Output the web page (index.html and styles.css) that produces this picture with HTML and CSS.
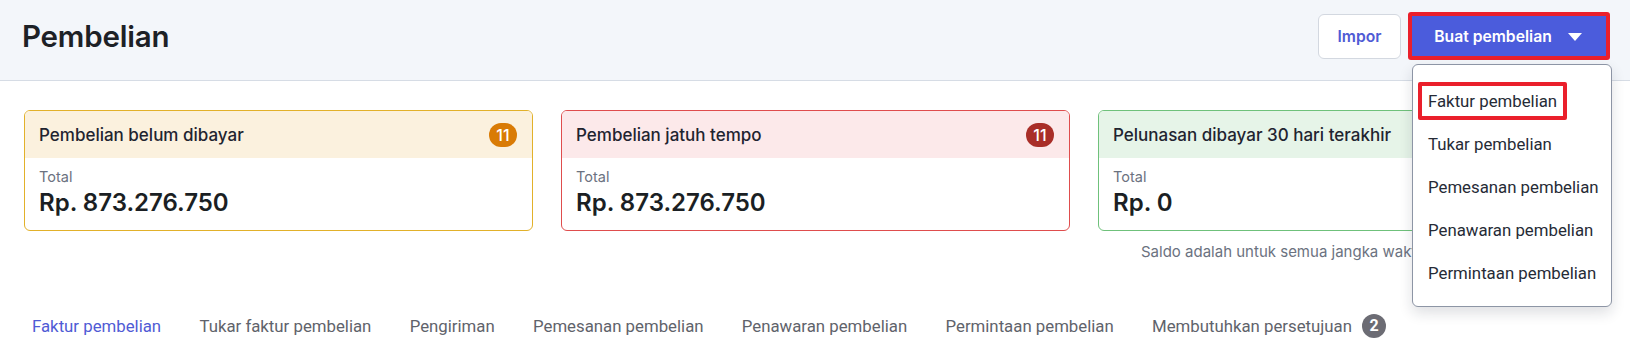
FILE: index.html
```html
<!DOCTYPE html>
<html lang="id">
<head>
<meta charset="utf-8">
<title>Pembelian</title>
<link rel="stylesheet" href="styles.css">
</head>
<body>
<header class="topbar">
  <h1 class="title">Pembelian</h1>
  <div class="actions">
    <button class="btn btn-outline">Impor</button>
    <div class="split">
      <button class="btn btn-primary">Buat pembelian <svg class="caret" width="14" height="8" viewBox="0 0 14 8"><path d="M0 0 L14 0 L7 8 Z" fill="#fff"/></svg></button>
      <ul class="menu">
        <li class="menu-item"><span class="mark">Faktur pembelian</span></li>
        <li class="menu-item">Tukar pembelian</li>
        <li class="menu-item">Pemesanan pembelian</li>
        <li class="menu-item">Penawaran pembelian</li>
        <li class="menu-item">Permintaan pembelian</li>
      </ul>
    </div>
  </div>
</header>
<main class="content">
  <section class="cards">
    <div class="card card-yellow">
      <div class="card-head"><span>Pembelian belum dibayar</span><span class="badge badge-orange">11</span></div>
      <div class="card-body"><div class="label">Total</div><div class="amount">Rp. 873.276.750</div></div>
    </div>
    <div class="card card-red">
      <div class="card-head"><span>Pembelian jatuh tempo</span><span class="badge badge-red">11</span></div>
      <div class="card-body"><div class="label">Total</div><div class="amount">Rp. 873.276.750</div></div>
    </div>
    <div class="card card-green">
      <div class="card-head"><span>Pelunasan dibayar 30 hari terakhir</span></div>
      <div class="card-body"><div class="label">Total</div><div class="amount">Rp. 0</div></div>
    </div>
    <p class="note">Saldo adalah untuk semua jangka waktu</p>
  </section>
  <nav class="tabs">
    <a class="tab active">Faktur pembelian</a>
    <a class="tab">Tukar faktur pembelian</a>
    <a class="tab">Pengiriman</a>
    <a class="tab">Pemesanan pembelian</a>
    <a class="tab">Penawaran pembelian</a>
    <a class="tab">Permintaan pembelian</a>
    <a class="tab">Membutuhkan persetujuan <span class="count">2</span></a>
  </nav>
</main>
</body>
</html>
```
FILE: styles.css
```css
* { box-sizing: border-box; }
body {
  margin: 0;
  background: #ffffff;
  font-family: Inter, "Liberation Sans", sans-serif;
  color: #1f2329;
}
.topbar {
  height: 81px;
  background: #f3f6fa;
  border-bottom: 1px solid #d6dce5;
  display: flex;
  align-items: center;
  justify-content: space-between;
  padding: 0 20px 8px 22px;
}
.title {
  margin: 0;
  font-size: 29.5px;
  font-weight: 600;
  color: #1d2126;
  letter-spacing: -0.2px;
}
.actions {
  display: flex;
  align-items: center;
  gap: 7px;
}
.btn {
  font-family: Inter, "Liberation Sans", sans-serif;
  font-size: 15.7px;
  font-weight: 600;
  cursor: pointer;
}
.btn-outline {
  width: 83px;
  height: 45px;
  background: #ffffff;
  border: 1px solid #d3d8e0;
  border-radius: 6px;
  color: #4f5bd5;
}
.split { position: relative; }
.btn-primary {
  width: 202px;
  height: 48px;
  background: #4b5cdc;
  border: 4px solid #ea1f2b;
  border-radius: 3px;
  color: #ffffff;
  display: flex;
  align-items: center;
  justify-content: center;
  gap: 16px;
  padding: 0 2px 0 0;
}
.caret { display: block; margin-top: 1px; }
.menu {
  position: absolute;
  top: 52px;
  right: -2px;
  width: 200px;
  margin: 0;
  padding: 14px 0 12px;
  list-style: none;
  background: #ffffff;
  border: 1px solid #8d95a5;
  border-radius: 6px;
  box-shadow: 0 6px 14px rgba(20, 30, 50, 0.14);
  z-index: 5;
}
.menu-item {
  height: 43px;
  display: flex;
  align-items: center;
  padding-left: 15px;
  font-family: Roboto, "Liberation Sans", sans-serif;
  font-size: 16.8px;
  color: #262b36;
}
.mark {
  display: inline-block;
  line-height: 30px;
  border: 4px solid #ea1f2b;
  padding: 0 6px;
  margin-left: -10px;
  border-radius: 2px;
}
.content {
  padding: 29px 23px 0 24px;
}
.cards {
  display: grid;
  grid-template-columns: repeat(3, 1fr);
  column-gap: 28px;
  row-gap: 0;
}
.card {
  border: 1px solid;
  border-radius: 6px;
  overflow: hidden;
}
.card-head {
  height: 47px;
  display: flex;
  align-items: center;
  justify-content: space-between;
  padding: 0 15px 0 14px;
  font-size: 17px;
  font-weight: 500;
  color: #1f2430;
}
.card-body {
  padding: 10px 14px 13px;
}
.label {
  font-size: 14.5px;
  line-height: 18px;
  color: #6b7280;
}
.amount {
  margin-top: 2px;
  font-size: 24px;
  line-height: 29px;
  font-weight: 600;
  color: #1b1f24;
}
.card-yellow { border-color: #e2b12a; }
.card-yellow .card-head { background: #fbf1de; }
.card-red { border-color: #df4d4d; }
.card-red .card-head { background: #fce9ea; }
.card-green { border-color: #6fc17b; }
.card-green .card-head { background: #e6f4e8; }
.badge {
  min-width: 28px;
  height: 24px;
  border-radius: 12px;
  display: inline-flex;
  align-items: center;
  justify-content: center;
  color: #ffffff;
  font-size: 16px;
  font-weight: 500;
}
.badge-orange { background: #d97b05; }
.badge-red { background: #a92e28; }
.note {
  grid-column: 3;
  margin: 10px 0 0;
  padding-left: 43px;
  font-size: 15px;
  line-height: 21px;
  color: #6b7280;
}
.tabs {
  display: flex;
  align-items: center;
  gap: 38.3px;
  margin-top: 52px;
  padding-left: 8px;
}
.tab {
  display: flex;
  align-items: center;
  gap: 10px;
  font-family: Roboto, "Liberation Sans", sans-serif;
  font-size: 16.8px;
  line-height: 24px;
  color: #5f636b;
}
.tab.active { color: #4f5bd5; }
.count {
  width: 24px;
  height: 24px;
  border-radius: 50%;
  background: #6c6c74;
  color: #ffffff;
  font-weight: 700;
  font-size: 16px;
  display: inline-flex;
  align-items: center;
  justify-content: center;
}
```
